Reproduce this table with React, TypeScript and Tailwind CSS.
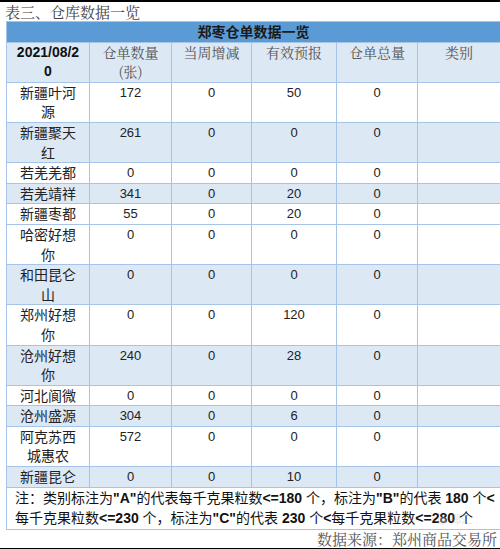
import React from 'react';

type Row = { name: string; qty: string; week: string; fore: string; total: string; hl?: boolean };

const rows: Row[] = [
  { name: '新疆叶河源', qty: '172', week: '0', fore: '50', total: '0' },
  { name: '新疆聚天红', qty: '261', week: '0', fore: '0', total: '0', hl: true },
  { name: '若羌羌都', qty: '0', week: '0', fore: '0', total: '0' },
  { name: '若羌靖祥', qty: '341', week: '0', fore: '20', total: '0', hl: true },
  { name: '新疆枣都', qty: '55', week: '0', fore: '20', total: '0' },
  { name: '哈密好想你', qty: '0', week: '0', fore: '0', total: '0' },
  { name: '和田昆仑山', qty: '0', week: '0', fore: '0', total: '0', hl: true },
  { name: '郑州好想你', qty: '0', week: '0', fore: '120', total: '0' },
  { name: '沧州好想你', qty: '240', week: '0', fore: '28', total: '0', hl: true },
  { name: '河北阆微', qty: '0', week: '0', fore: '0', total: '0' },
  { name: '沧州盛源', qty: '304', week: '0', fore: '6', total: '0', hl: true },
  { name: '阿克苏西城惠农', qty: '572', week: '0', fore: '0', total: '0' },
  { name: '新疆昆仑', qty: '0', week: '0', fore: '10', total: '0', hl: true },
];

const cjk = "font-['Noto_Sans_CJK_SC',sans-serif]";
const serif = "font-['Noto_Serif_CJK_SC','Noto_Sans_CJK_SC',serif]";
const num = "font-['Liberation_Sans','Noto_Sans_CJK_SC',sans-serif]";

const cell = 'border border-[#a6c4e8] px-2 py-0 align-top text-center leading-[19.6px]';

function B({ children }: { children: React.ReactNode }) {
  return <span className={`${num} font-bold`}>{children}</span>;
}

export default function App() {
  return (
    <div className="relative flex h-[549px] w-[500px] flex-col overflow-hidden bg-white">
      <div className="h-[2px] shrink-0 bg-black" />
      <div className={`${serif} h-[19px] shrink-0 pl-[5px] text-[15px] leading-[19px] text-[#444]`}>表三、仓库数据一览</div>

      <table className="ml-[6px] w-[494px] shrink-0 table-fixed border-collapse">
        <colgroup>
          <col className="w-[83px]" />
          <col className="w-[82px]" />
          <col className="w-[80px]" />
          <col className="w-[85px]" />
          <col className="w-[81px]" />
          <col className="w-[83px]" />
        </colgroup>
        <thead>
          <tr className="bg-[#5b9bd5]">
            <th
              colSpan={6}
              className={`${cjk} border border-[#a6c4e8] py-0 text-center text-[14px] font-bold leading-[19.6px] text-[#1a1a1a]`}
            >
              郑枣仓单数据一览
            </th>
          </tr>
          <tr className="bg-[#dde8f5]">
            <th className={`${cell} ${num} break-all text-[14px] font-bold text-[#111]`}>2021/08/20</th>
            <th className={`${cell} ${serif} text-[14px] font-normal text-[#555]`}>仓单数量(张)</th>
            <th className={`${cell} ${serif} text-[14px] font-normal text-[#555]`}>当周增减</th>
            <th className={`${cell} ${serif} text-[14px] font-normal text-[#555]`}>有效预报</th>
            <th className={`${cell} ${serif} text-[14px] font-normal text-[#555]`}>仓单总量</th>
            <th className={`${cell} ${serif} text-[14px] font-normal text-[#555]`}>类别</th>
          </tr>
        </thead>
        <tbody>
          {rows.map((r) => (
            <tr key={r.name} className={r.hl ? 'bg-[#dde8f5]' : 'bg-white'}>
              <td className={`${cell} ${cjk} text-[14px] text-[#222]`}>{r.name}</td>
              <td className={`${cell} ${num} text-[13px] text-[#222]`}>{r.qty}</td>
              <td className={`${cell} ${num} text-[13px] text-[#222]`}>{r.week}</td>
              <td className={`${cell} ${num} text-[13px] text-[#222]`}>{r.fore}</td>
              <td className={`${cell} ${num} text-[13px] text-[#222]`}>{r.total}</td>
              <td className={`${cell} ${num} text-[13px] text-[#222]`}></td>
            </tr>
          ))}
          <tr className="bg-white">
            <td
              colSpan={6}
              className={`${cjk} border border-[#a6c4e8] px-2 py-0 text-left text-[14px] leading-[19.6px] whitespace-nowrap text-[#111]`}
            >
              注：类别标注为<B>"A"</B>的代表每千克果粒数<B>&lt;=180 </B>个，标注为<B>"B"</B>的代表<B> 180 </B>个<B>&lt;</B>
              <br />
              每千克果粒数<B>&lt;=230 </B>个，标注为<B>"C"</B>的代表<B> 230 </B>个<B>&lt;</B>每千克果粒数<B>&lt;=280 </B>个
            </td>
          </tr>
        </tbody>
      </table>

      <div className="flex-1" />
      <div className={`${serif} shrink-0 pr-[3px] text-right text-[15px] leading-[18px] text-[#555]`}>
        数据来源：郑州商品交易所
      </div>
      <div className="h-[2px] shrink-0 bg-black" />
      <div className="h-[1px] shrink-0" />

      {/* faint watermark */}
      <div className="absolute left-[432px] top-[512px] flex items-center gap-[2px] opacity-30">
        <svg width="16" height="14" viewBox="0 0 16 14" fill="none" stroke="#9aa0a6" strokeWidth="1">
          <ellipse cx="6" cy="6" rx="5" ry="4.2" />
          <ellipse cx="10.5" cy="8.5" rx="4.2" ry="3.5" fill="white" />
        </svg>
        <span className={`${cjk} text-[11px] leading-[13px] text-[#9aa0a6]`}>郑汇</span>
      </div>
    </div>
  );
}
